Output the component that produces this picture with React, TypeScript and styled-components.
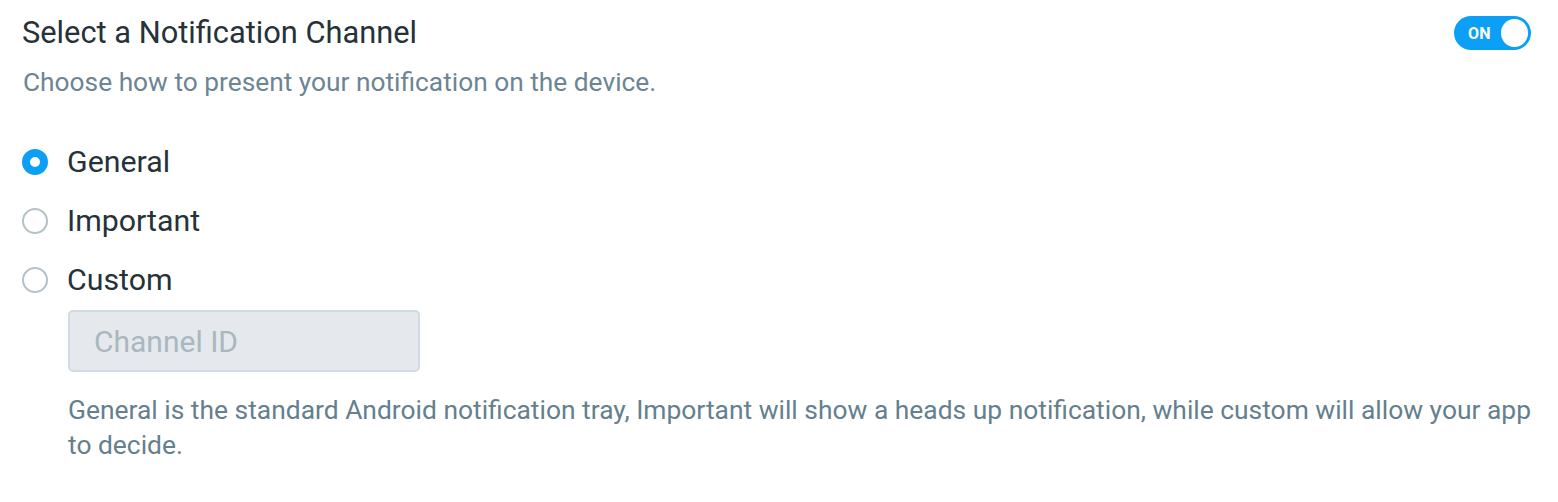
import React, { useState } from 'react'
import styled, { createGlobalStyle } from 'styled-components'

const GlobalStyle = createGlobalStyle`
  body {
    margin: 0;
    background: #ffffff;
    font-family: Roboto, "Liberation Sans", Arial, sans-serif;
  }
`

const Panel = styled.section`
  display: flex;
  flex-direction: column;
  padding: 16px 20px 0 22px;
`

const HeaderRow = styled.div`
  display: flex;
  justify-content: space-between;
  align-items: flex-start;
  padding-right: 8px;
`

const Title = styled.h2`
  margin: 0;
  font-size: 30.8px;
  line-height: 34px;
  font-weight: 400;
  color: #263238;
`

const Subtitle = styled.p`
  margin: 15px 0 0 1px;
  font-size: 26.3px;
  line-height: 34px;
  color: #6c8593;
`

const Toggle = styled.button<{ on: boolean }>`
  display: flex;
  align-items: center;
  justify-content: ${({ on }) => (on ? 'flex-end' : 'flex-start')};
  gap: 10px;
  width: 77px;
  height: 34px;
  padding: 0 3px 0 14px;
  border: none;
  border-radius: 17px;
  background: ${({ on }) => (on ? '#0ba0f6' : '#cfd8dc')};
  cursor: pointer;
  margin-right: -1px;
`

const ToggleLabel = styled.span`
  font-family: Roboto, "Liberation Sans", Arial, sans-serif;
  font-size: 16px;
  font-weight: 700;
  color: #ffffff;
  letter-spacing: 0.3px;
`

const Knob = styled.span`
  width: 28px;
  height: 28px;
  border-radius: 50%;
  background: #ffffff;
`

const Options = styled.div`
  display: flex;
  flex-direction: column;
  margin-top: 33px;
`

const OptionRow = styled.label`
  display: flex;
  align-items: center;
  gap: 19px;
  height: 59px;
  cursor: pointer;
`

const Radio = styled.span<{ checked: boolean }>`
  box-sizing: border-box;
  width: 26px;
  height: 26px;
  border-radius: 50%;
  border: ${({ checked }) => (checked ? '8px solid #0ba0f6' : '2px solid #b4c1c8')};
  background: #ffffff;
  flex-shrink: 0;
`

const OptionText = styled.span`
  font-size: 30.3px;
  line-height: 34px;
  color: #263238;
`

const ChannelInput = styled.input`
  box-sizing: border-box;
  width: 352px;
  height: 62px;
  margin: 1px 0 0 46px;
  padding: 0 24px;
  border: 2px solid #d2dbe0;
  border-radius: 5px;
  background: #e5e9ed;
  font-family: Roboto, "Liberation Sans", Arial, sans-serif;
  font-size: 30px;
  color: #263238;
  &::placeholder {
    color: #aab7bf;
  }
`

const Helper = styled.p`
  margin: 21px 0 0 46px;
  font-size: 26.4px;
  line-height: 35px;
  color: #647f8d;
`

const channels = ['General', 'Important', 'Custom']

export default function App() {
  const [enabled, setEnabled] = useState(true)
  const [channel, setChannel] = useState('General')

  return (
    <>
      <GlobalStyle />
      <Panel>
        <HeaderRow>
          <Title>Select a Notification Channel</Title>
          <Toggle on={enabled} onClick={() => setEnabled(!enabled)}>
            <ToggleLabel>{enabled ? 'ON' : 'OFF'}</ToggleLabel>
            <Knob />
          </Toggle>
        </HeaderRow>
        <Subtitle>Choose how to present your notification on the device.</Subtitle>
        <Options>
          {channels.map((c) => (
            <OptionRow key={c} onClick={() => setChannel(c)}>
              <Radio checked={channel === c} />
              <OptionText>{c}</OptionText>
            </OptionRow>
          ))}
        </Options>
        <ChannelInput placeholder="Channel ID" disabled={channel !== 'Custom'} />
        <Helper>
          General is the standard Android notification tray, Important will show a heads up
          notification, while custom will allow your app to decide.
        </Helper>
      </Panel>
    </>
  )
}
